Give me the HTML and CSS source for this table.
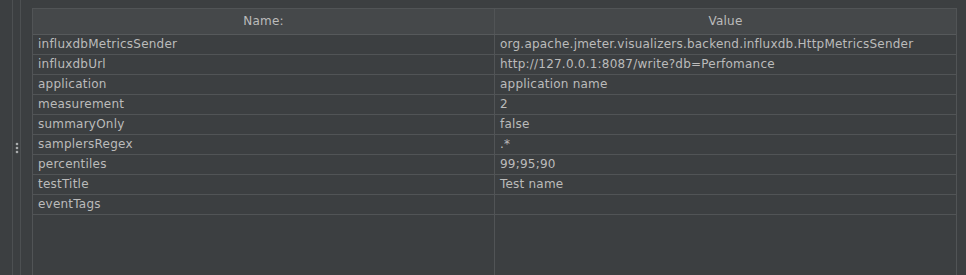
FILE: index.html
```html
<!DOCTYPE html>
<html>
<head>
<meta charset="utf-8">
<link rel="stylesheet" href="styles.css">
</head>
<body>
<div class="frame">
  <div class="gutter">
    <div class="rail"></div>
    <div class="handle">
      <svg width="4" height="12" viewBox="0 0 4 12"><circle cx="2" cy="2" r="1.3" fill="#a9abad"/><circle cx="2" cy="6" r="1.3" fill="#a9abad"/><circle cx="2" cy="10" r="1.3" fill="#a9abad"/></svg>
    </div>
    <div class="rail2"></div>
  </div>
  <div class="panel">
    <div class="row head">
      <div class="cell">Name:</div>
      <div class="cell">Value</div>
    </div>
    <div class="row"><div class="cell">influxdbMetricsSender</div><div class="cell">org.apache.jmeter.visualizers.backend.influxdb.HttpMetricsSender</div></div>
    <div class="row"><div class="cell">influxdbUrl</div><div class="cell">http://127.0.0.1:8087/write?db=Perfomance</div></div>
    <div class="row"><div class="cell">application</div><div class="cell">application name</div></div>
    <div class="row"><div class="cell">measurement</div><div class="cell">2</div></div>
    <div class="row"><div class="cell">summaryOnly</div><div class="cell">false</div></div>
    <div class="row"><div class="cell">samplersRegex</div><div class="cell">.*</div></div>
    <div class="row"><div class="cell">percentiles</div><div class="cell">99;95;90</div></div>
    <div class="row"><div class="cell">testTitle</div><div class="cell">Test name</div></div>
    <div class="row"><div class="cell">eventTags</div><div class="cell"></div></div>
    <div class="filler"><div class="cell"></div><div class="cell"></div></div>
  </div>
</div>
</body>
</html>
```
FILE: styles.css
```css
html, body {
  margin: 0;
  padding: 0;
  background: #3c3f41;
  height: 100%;
  overflow: hidden;
}
.frame {
  display: flex;
  height: 275px;
  width: 966px;
  font-family: "DejaVu Sans", sans-serif;
  font-size: 12px;
  letter-spacing: 0.22px;
  color: #bbbbbb;
}
.gutter {
  width: 32px;
  flex: none;
  display: flex;
  position: relative;
}
.rail {
  margin-left: 12px;
  width: 1px;
  background: #4d5052;
}
.handle {
  width: 7px;
  display: flex;
  align-items: flex-start;
  justify-content: center;
  padding-top: 142px;
}
.rail2 {
  width: 1px;
  background: #4d5052;
}
.panel {
  margin-top: 8px;
  width: 923px;
  flex: none;
  border-left: 1px solid #515456;
  border-top: 1px solid #515456;
  border-right: 1px solid #515456;
  display: flex;
  flex-direction: column;
}
.row {
  display: grid;
  grid-template-columns: 462px 461px;
  height: 20px;
  border-bottom: 1px solid #515456;
  box-sizing: border-box;
}
.row.head {
  height: 26px;
  background: #45484a;
  border-bottom: 1px solid #56595b;
}
.cell {
  border-right: 1px solid #515456;
  padding-left: 5px;
  line-height: 19px;
  white-space: nowrap;
  overflow: hidden;
}
.cell:last-child {
  border-right: none;
}
.head .cell {
  text-align: center;
  line-height: 25px;
  padding-left: 0;
}
.filler {
  flex: 1;
  display: grid;
  grid-template-columns: 462px 461px;
}
```
